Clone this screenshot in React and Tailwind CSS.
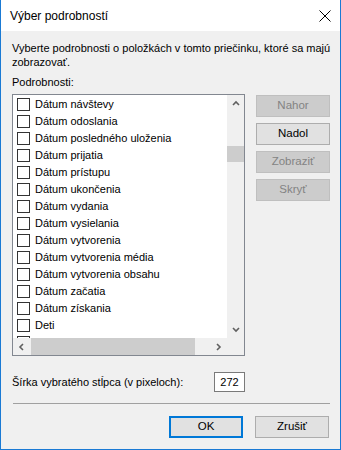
import React from "react";

const items = [
  "Dátum návštevy",
  "Dátum odoslania",
  "Dátum posledného uloženia",
  "Dátum prijatia",
  "Dátum prístupu",
  "Dátum ukončenia",
  "Dátum vydania",
  "Dátum vysielania",
  "Dátum vytvorenia",
  "Dátum vytvorenia média",
  "Dátum vytvorenia obsahu",
  "Dátum začatia",
  "Dátum získania",
  "Deti",
  "",
];

function Chevron({ dir }) {
  // small scrollbar arrows
  const paths = {
    up: "M1 5 L4 2 L7 5",
    down: "M1 2 L4 5 L7 2",
    left: "M5 1 L2 4 L5 7",
    right: "M2 1 L5 4 L2 7",
  };
  return (
    <svg width="8" height="8" viewBox="0 0 8 8">
      <path d={paths[dir]} fill="none" stroke="#606060" strokeWidth="1.6" />
    </svg>
  );
}

function SideButton({ label, enabled }) {
  return (
    <div
      className={
        enabled
          ? "h-[22px] w-[74px] flex items-center justify-center border border-[#adadad] bg-[#e1e1e1] text-black text-[11.5px]"
          : "h-[22px] w-[74px] flex items-center justify-center border border-[#bfbfbf] bg-[#cccccc] text-[#838383] text-[11.5px]"
      }
    >
      {label}
    </div>
  );
}

export default function App() {
  return (
    <div className="w-[341px] h-[450px] bg-[#f0f0f0] border-x border-b border-[#1a7ad4] flex flex-col text-[11px] text-black overflow-hidden font-['Liberation_Sans',Arial,sans-serif]">
      {/* title bar */}
      <div className="h-[31px] bg-white flex items-center justify-between pl-[9px] pr-[9px] shrink-0">
        <span className="text-[12px]">Výber podrobností</span>
        <svg width="12" height="12" viewBox="0 0 12 12">
          <path d="M0.5 0.5 L11.5 11.5 M11.5 0.5 L0.5 11.5" stroke="#000" strokeWidth="1" />
        </svg>
      </div>

      <div className="flex flex-col pl-[11px] pr-[10px]">
        <p className="mt-[10px] leading-[14px] whitespace-nowrap">
          Vyberte podrobnosti o položkách v tomto priečinku, ktoré sa majú
          <br />
          zobrazovať.
        </p>
        <p className="mt-[6px] leading-[14px]">Podrobnosti:</p>

        <div className="mt-[5px] flex gap-[11px]">
          {/* list box */}
          <div className="w-[233px] h-[262px] border border-[#828790] bg-white flex flex-col">
            <div className="flex h-[243px]">
              <div className="flex-1 overflow-hidden pt-[1px]">
                {items.map((t, i) => (
                  <div key={i} className="h-[17px] flex items-center pl-[4px] gap-[5px] whitespace-nowrap">
                    <div className="w-[13px] h-[13px] border border-[#333333] bg-white shrink-0" />
                    <span className="text-[#000000]">{t}</span>
                  </div>
                ))}
              </div>
              <div className="w-[17px] bg-[#f0f0f0] flex flex-col items-center">
                <div className="h-[17px] flex items-center justify-center">
                  <Chevron dir="up" />
                </div>
                <div className="mt-[34px] w-[17px] h-[16px] bg-[#cdcdcd]" />
                <div className="flex-1" />
                <div className="h-[17px] flex items-center justify-center">
                  <Chevron dir="down" />
                </div>
              </div>
            </div>
            <div className="h-[17px] bg-[#f0f0f0] flex">
              <div className="w-[17px] flex items-center justify-center">
                <Chevron dir="left" />
              </div>
              <div className="w-[164px] h-[17px] bg-[#cdcdcd] ml-[1px]" />
              <div className="flex-1" />
              <div className="w-[17px] flex items-center justify-center">
                <Chevron dir="right" />
              </div>
              <div className="w-[17px]" />
            </div>
          </div>

          {/* buttons */}
          <div className="flex flex-col gap-[6px] mt-[1px]">
            <SideButton label="Nahor" />
            <SideButton label="Nadol" enabled />
            <SideButton label="Zobraziť" />
            <SideButton label="Skryť" />
          </div>
        </div>

        <div className="mt-[16px] flex items-center w-[233px] justify-between">
          <span>Šírka vybratého stĺpca (v pixeloch):</span>
          <div className="w-[31px] h-[20px] border border-[#7a7a7a] bg-white flex items-center justify-center">
            272
          </div>
        </div>

        <div className="mt-[11px] h-px bg-[#a0a0a0] w-[317px] ml-[1px]" />

        <div className="mt-[12px] flex justify-end gap-[12px] pr-[1px] text-[11.5px]">
          <div className="h-[22px] w-[74px] flex items-center justify-center border-2 border-[#0078d7] bg-[#e1e1e1]">
            OK
          </div>
          <div className="h-[22px] w-[74px] flex items-center justify-center border border-[#adadad] bg-[#e1e1e1]">
            Zrušiť
          </div>
        </div>
      </div>
    </div>
  );
}
